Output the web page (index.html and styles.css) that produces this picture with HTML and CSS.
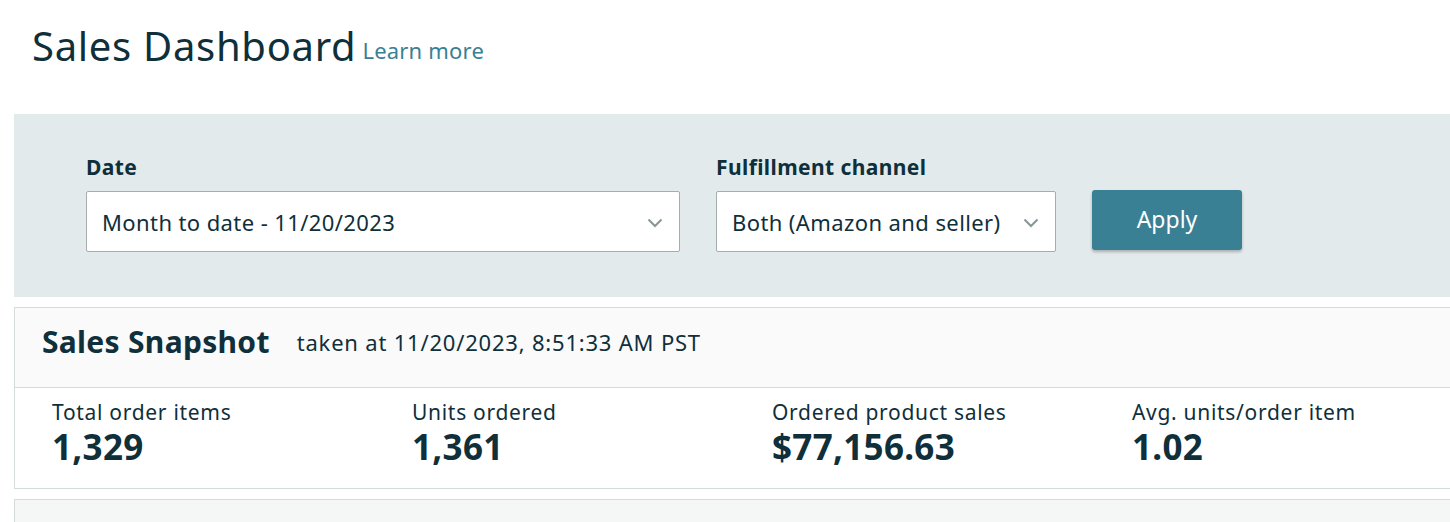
FILE: index.html
```html
<!DOCTYPE html>
<html lang="en">
<head>
<meta charset="utf-8">
<title>Sales Dashboard</title>
<link rel="stylesheet" href="styles.css">
</head>
<body>
<div class="page">
  <header class="page-head">
    <h1 class="title">Sales Dashboard</h1>
    <a class="learn" href="#">Learn more</a>
  </header>

  <section class="filters">
    <div class="field">
      <label class="field-label">Date</label>
      <div class="select select-date">
        <span class="select-text">Month to date - 11/20/2023</span>
        <svg class="chev" width="16" height="10" viewBox="0 0 16 10"><path d="M1.5 1.5 L8 8 L14.5 1.5" fill="none" stroke="#879596" stroke-width="2"/></svg>
      </div>
    </div>
    <div class="field">
      <label class="field-label">Fulfillment channel</label>
      <div class="select select-channel">
        <span class="select-text">Both (Amazon and seller)</span>
        <svg class="chev" width="16" height="10" viewBox="0 0 16 10"><path d="M1.5 1.5 L8 8 L14.5 1.5" fill="none" stroke="#879596" stroke-width="2"/></svg>
      </div>
    </div>
    <button class="apply">Apply</button>
  </section>

  <section class="card">
    <div class="card-head">
      <h2 class="card-title">Sales Snapshot</h2>
      <span class="taken">taken at 11/20/2023, 8:51:33 AM PST</span>
    </div>
    <div class="metrics">
      <div class="metric"><div class="m-label">Total order items</div><div class="m-value">1,329</div></div>
      <div class="metric"><div class="m-label">Units ordered</div><div class="m-value">1,361</div></div>
      <div class="metric"><div class="m-label">Ordered product sales</div><div class="m-value">$77,156.63</div></div>
      <div class="metric"><div class="m-label">Avg. units/order item</div><div class="m-value">1.02</div></div>
    </div>
  </section>

  <section class="card card-next"></section>
</div>
</body>
</html>
```

FILE: styles.css
```css
* { box-sizing: border-box; }
html, body { margin: 0; padding: 0; background: #fff; overflow: hidden; }
body {
  font-family: "Noto Sans", "Open Sans", Arial, sans-serif;
  color: #0f2f3a;
  width: 1450px;
  height: 522px;
}
.page { padding-left: 14px; width: 1500px; }

.page-head {
  display: flex;
  align-items: flex-start;
  padding: 20px 0 0 18px;
  height: 114px;
}
.title {
  margin: 0;
  font-size: 40px;
  font-weight: 400;
  letter-spacing: 0.7px;
  color: #0f2f3a;
  line-height: 52px;
}
.learn {
  margin: 15px 0 0 6px;
  font-size: 22px;
  line-height: 30px;
  letter-spacing: 0.2px;
  color: #3a8094;
  text-decoration: none;
}

.filters {
  background: #e3eaec;
  height: 183px;
  display: flex;
  align-items: flex-start;
  padding: 40px 0 0 72px;
  gap: 36px;
}
.field { display: flex; flex-direction: column; }
.field-label {
  font-size: 21px;
  font-weight: 700;
  line-height: 27px;
  height: 37px;
  color: #0f2f3a;
  letter-spacing: 0.4px;
}
.select {
  height: 61px;
  background: #fff;
  border: 1px solid #a6adaf;
  border-radius: 2px;
  display: flex;
  align-items: center;
  justify-content: space-between;
  padding: 0 16px 0 15px;
  font-size: 22px;
  color: #0f2f3a;
}
.select-text { letter-spacing: 0.4px; }
.select-date { width: 594px; }
.select-channel { width: 340px; }
.chev { margin-top: 2px; flex: none; }

.apply {
  margin-top: 36px;
  width: 150px;
  height: 60px;
  background: #3a8094;
  color: #fff;
  border: none;
  border-radius: 3px;
  box-shadow: 0 2px 3px rgba(0,0,0,0.25);
  font-family: inherit;
  font-size: 23px;
  padding-bottom: 3px;
}

.card {
  margin-top: 10px;
  border: 1px solid #d5dbdb;
  border-right: none;
  background: #fff;
}
.card-head {
  height: 80px;
  background: #fafafa;
  border-bottom: 1px solid #d5dbdb;
  display: flex;
  align-items: center;
  padding: 0 0 12px 27px;
  gap: 27px;
}
.card-title {
  margin: 0;
  font-size: 30px;
  font-weight: 700;
  letter-spacing: 0.3px;
  color: #0f2f3a;
}
.taken { font-size: 22px; color: #0f2f3a; letter-spacing: 0.8px; }

.metrics {
  display: grid;
  grid-template-columns: repeat(4, 360px);
  height: 100px;
  padding: 10px 0 0 37px;
}
.m-label { font-size: 21px; line-height: 28px; letter-spacing: 0.7px; }
.m-value { font-size: 35px; font-weight: 700; line-height: 40px; margin-top: 1px; letter-spacing: 0.3px; }

.card-next {
  height: 40px;
  background: #f5f7f7;
}
```
